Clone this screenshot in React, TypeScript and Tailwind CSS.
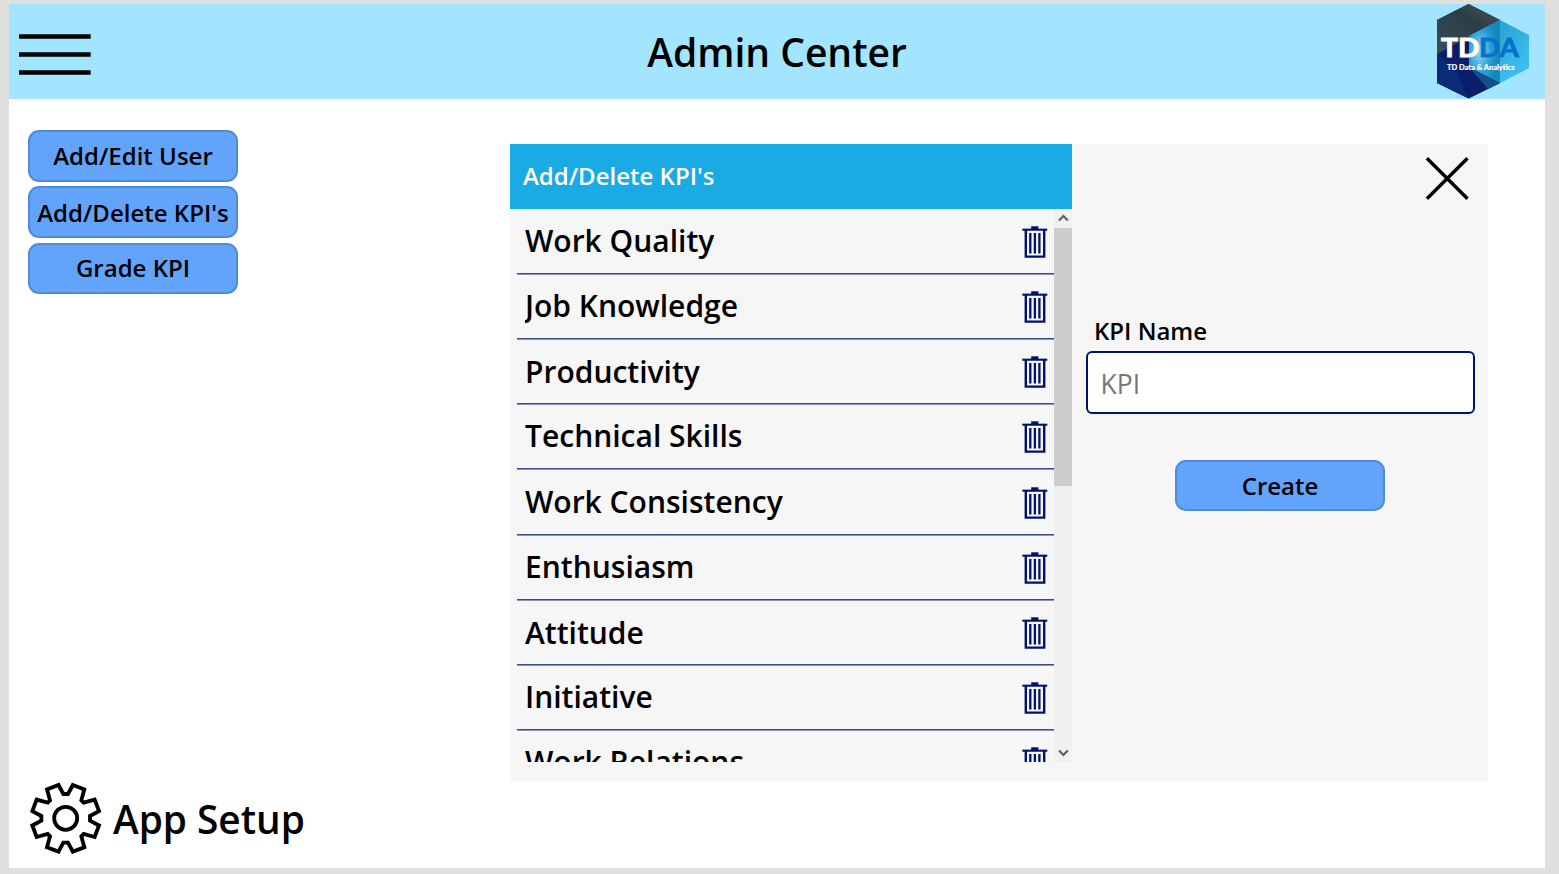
import React from "react";

const kpis = [
  "Work Quality",
  "Job Knowledge",
  "Productivity",
  "Technical Skills",
  "Work Consistency",
  "Enthusiasm",
  "Attitude",
  "Initiative",
  "Work Relations",
];

function MenuIcon() {
  return (
    <svg width="72" height="42" viewBox="0 0 72 42" className="block">
      <path d="M0 2.5H71.7M0 20.5H71.7M0 38.5H71.7" stroke="#000" strokeWidth="4.4" />
    </svg>
  );
}

function GearIcon() {
  return (
    <svg width="72" height="72" viewBox="-107 -109 216 216" fill="none" stroke="#000" strokeWidth="11.5" className="block">
      <path d="M21.5 -100L56 -87L47 -54L54 -47L87 -56L100 -21.5L73 -7V7L100 21.5L87 56L54 47L47 54L56 87L21.5 100L7 73H-7L-21.5 100L-56 87L-47 54L-54 47L-87 56L-100 21.5L-73 7V-7L-100 -21.5L-87 -56L-54 -47L-47 -54L-56 -87L-21.5 -100L-7 -73H7Z" />
      <circle r="34.5" />
    </svg>
  );
}

function TrashIcon() {
  return (
    <svg width="26" height="33" viewBox="0 0 26 33" fill="none" stroke="#00126b" className="block shrink-0">
      <path d="M0.3 3.7H25.3" strokeWidth="2.1" />
      <path d="M9.2 1.8H16.4" strokeWidth="3" />
      <path d="M3.8 4V30.6H22.2V4" strokeWidth="2.4" />
      <path d="M8.3 7V27.5M12.9 7V27.5M17.4 7V27.5" strokeWidth="2.3" />
    </svg>
  );
}

function Logo() {
  return (
    <svg width="94" height="96" viewBox="0 0 94 96" className="block">
      <defs>
        <linearGradient id="slate" x1="0" y1="1" x2="1" y2="0">
          <stop offset="0" stopColor="#384f58" />
          <stop offset="0.6" stopColor="#2b3d46" />
          <stop offset="1" stopColor="#4a5359" />
        </linearGradient>
        <linearGradient id="navy" x1="0" y1="0" x2="1" y2="1">
          <stop offset="0" stopColor="#0a2a7a" />
          <stop offset="0.5" stopColor="#06175f" />
          <stop offset="1" stopColor="#15608f" />
        </linearGradient>
        <linearGradient id="cyan" x1="0" y1="0" x2="1" y2="1">
          <stop offset="0" stopColor="#1f93c2" />
          <stop offset="1" stopColor="#45c8f7" />
        </linearGradient>
        <radialGradient id="glow" cx="0.35" cy="0.5" r="0.6">
          <stop offset="0" stopColor="#8fd6f2" />
          <stop offset="0.6" stopColor="#2a9fd6" />
          <stop offset="1" stopColor="#1487bb" />
        </radialGradient>
      </defs>
      <path d="M32.5 0L64 16V79L32.5 94.5L1 79V16Z" fill="url(#navy)" />
      <path d="M1 50L34 45L64 79L32.5 94.5Z" fill="#0a1f6a" />
      <path d="M1 50V79L32.5 94.5L18 62Z" fill="#0a2b78" />
      <path d="M32.5 0L64 16L1 50V16Z" fill="url(#slate)" />
      <path d="M64 16L93 31V64L64 79L33 63V32Z" fill="url(#cyan)" />
      <path d="M64 16V79L33 63V32Z" fill="url(#glow)" />
      <path d="M64 79L93 64V48Z" fill="#3bbdf0" />
      <path d="M33 63L64 79L52 85Z" fill="#184f88" />
      <g className="font-[Lato,sans-serif]" fontWeight="700">
        <text x="5" y="53.3" fontSize="27.5" fill="#fff" stroke="#fff" strokeWidth="0.9" textLength="38.5" lengthAdjust="spacingAndGlyphs">TD</text>
        <text x="43" y="53.3" fontSize="27.5" fill="#0873c9" stroke="#0873c9" strokeWidth="0.9" textLength="40" lengthAdjust="spacingAndGlyphs">DA</text>
        <text x="11" y="66.3" fontSize="7" fill="#fff" stroke="#fff" strokeWidth="0.2" textLength="67.5" lengthAdjust="spacingAndGlyphs">TD Data &amp; Analytics</text>
      </g>
    </svg>
  );
}

const buttonBase =
  "block w-[210px] rounded-[11px] border-2 border-[#4f8bd9] bg-[#62a4fc] text-center text-[24px] font-semibold whitespace-nowrap";

export default function App() {
  return (
    <div className="h-[874px] w-[1559px] overflow-hidden bg-[#dfdfdf] pt-1 pl-[9px] font-['Open_Sans',sans-serif] text-black">
      <div className="flex h-[864px] w-[1536px] flex-col bg-white">
        <header className="flex h-[95px] shrink-0 items-start bg-[#a3e5ff]">
          <button className="mt-[30px] ml-[10px] w-[72px]" aria-label="Menu">
            <MenuIcon />
          </button>
          <h1 className="flex-1 pt-[18px] pl-[27px] text-center text-[39px] leading-[60px] font-semibold">Admin Center</h1>
          <div className="mr-[15px] w-[94px]">
            <Logo />
          </div>
        </header>

        <main className="flex h-[683px] shrink-0">
          <nav className="ml-[19px] flex w-[210px] flex-col pt-[31px]">
            <button className={`${buttonBase} h-[52px]`}>Add/Edit User</button>
            <button className={`${buttonBase} mt-1 h-[52px] pt-px`}>Add/Delete KPI's</button>
            <button className={`${buttonBase} mt-[5px] h-[51px] pb-[2px]`}>Grade KPI</button>
          </nav>

          <section className="mt-[45px] ml-[272px] flex h-[638px] w-[978px] bg-[#f6f6f6]">
            <div className="w-[562px]">
              <h2 className="h-[65px] bg-[#1aaae4] pl-[13px] text-[24px] leading-[63px] font-semibold text-white">
                Add/Delete KPI's
              </h2>
              <div className="flex h-[553px]">
                <ul className="w-[544px] overflow-hidden pt-[0.6px] pl-[7px]">
                  {kpis.map((kpi, i) => (
                    <li key={kpi} className="flex h-[65.2px] flex-col">
                      <div className="flex min-h-0 flex-1 justify-between pr-[6px] pl-2">
                        <span
                          className={`overflow-hidden text-[30px] leading-[62.4px] font-semibold ${
                            i === 2 || i === 4 || i === 6 ? "pt-px" : ""
                          }`}
                        >
                          {kpi}
                        </span>
                        <span className="pt-[16.3px]">
                          <TrashIcon />
                        </span>
                      </div>
                      <div className="h-[2px] shrink-0 border-t border-b border-t-[#3b4a93] border-b-[#8b94c0]" />
                    </li>
                  ))}
                </ul>
                <div className="flex w-[18px] flex-col items-center bg-[#f0f0f0]">
                  <svg width="18" height="19" viewBox="0 0 18 19" className="block shrink-0">
                    <path d="M5 11.5L9.4 7L13.8 11.5" fill="none" stroke="#606060" strokeWidth="2.2" />
                  </svg>
                  <div className="h-[258px] w-full bg-[#cdcdcd]" />
                  <svg width="18" height="18" viewBox="0 0 18 18" className="mt-auto block shrink-0">
                    <path d="M5 6.5L9.4 11L13.8 6.5" fill="none" stroke="#606060" strokeWidth="2.2" />
                  </svg>
                </div>
              </div>
            </div>

            <div className="flex w-[416px] flex-col pl-[14px]">
              <button className="mt-[13px] mr-[19px] self-end" aria-label="Close">
                <svg width="44" height="44" viewBox="0 0 44 44" className="block">
                  <path d="M1.9 1.2L42.5 41.8M42.5 1.2L1.9 41.8" stroke="#000" strokeWidth="3.4" />
                </svg>
              </button>
              <label className="mt-[114px] pl-2 text-[24px] leading-[32px] font-semibold">KPI Name</label>
              <input
                placeholder="KPI"
                className="mt-1 h-[63px] w-[389px] rounded-[6px] border-2 border-[#00126b] bg-white pt-[2px] pl-[12.5px] text-[26.5px] placeholder:text-[#767676]"
              />
              <button className={`${buttonBase} mt-[46px] ml-[89px] h-[51px]`}>Create</button>
            </div>
          </section>
        </main>

        <footer className="flex items-start">
          <div className="ml-[21px]">
            <GearIcon />
          </div>
          <span className="ml-[11px] pt-px text-[38.8px] leading-[72px] font-semibold">App Setup</span>
        </footer>
      </div>
    </div>
  );
}
